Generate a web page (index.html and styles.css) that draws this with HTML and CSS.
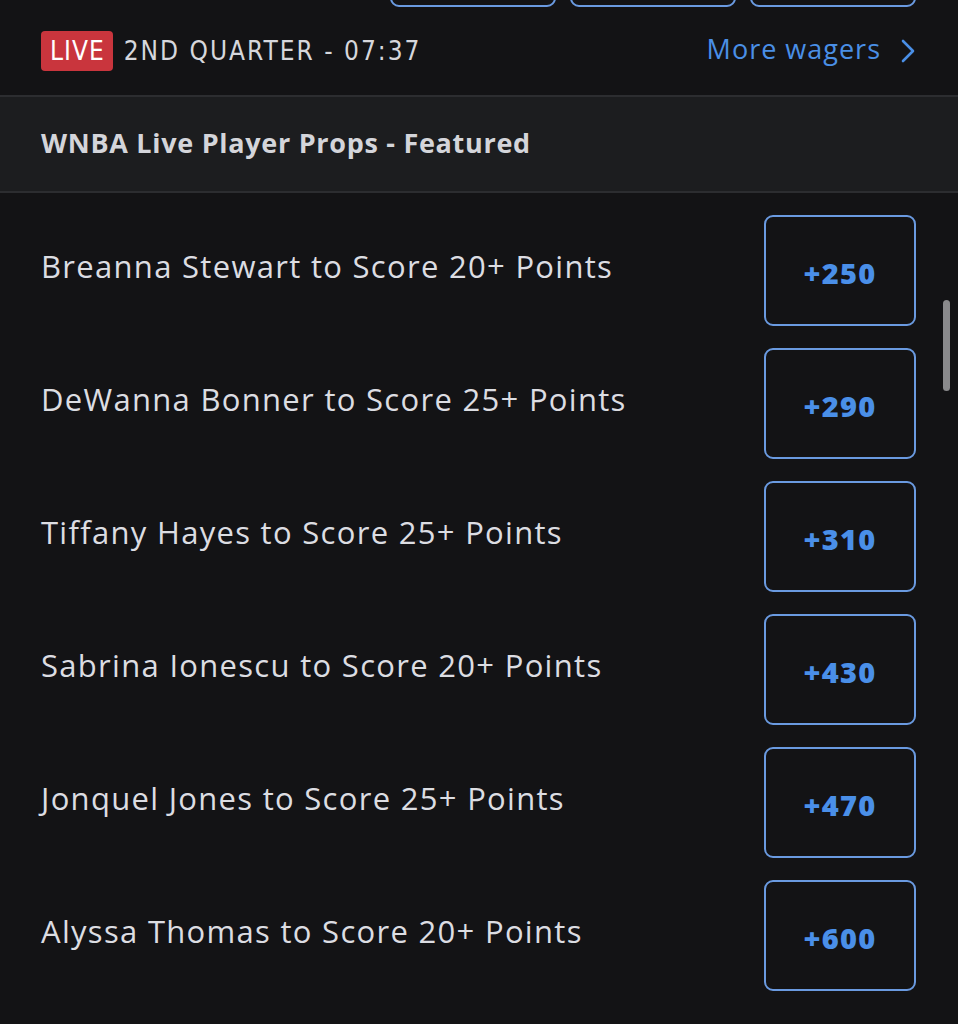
FILE: index.html
```html
<!DOCTYPE html>
<html>
<head>
  <title>WNBA Live Player Props</title>
  <link rel="stylesheet" href="styles.css">
</head>
<body>
  <div class="top-odds">
    <div class="top-btn"></div>
    <div class="top-btn"></div>
    <div class="top-btn"></div>
  </div>

  <div class="live-row">
    <div class="live-info">
      <span class="live-badge">LIVE</span>
      <span class="clock">2ND QUARTER - 07:37</span>
    </div>
    <a class="more" href="#">More wagers
      <svg width="16" height="24" viewBox="0 0 16 24"><path d="M3 2 L13 12 L3 22" fill="none" stroke="#4a8fe6" stroke-width="2.6" stroke-linecap="round" stroke-linejoin="round"/></svg>
    </a>
  </div>

  <div class="section-head">WNBA Live Player Props - Featured</div>

  <div class="props">
    <div class="prop">
      <span class="prop-name">Breanna Stewart to Score 20+ Points</span>
      <button class="odds">+250</button>
    </div>
    <div class="prop">
      <span class="prop-name">DeWanna Bonner to Score 25+ Points</span>
      <button class="odds">+290</button>
    </div>
    <div class="prop">
      <span class="prop-name">Tiffany Hayes to Score 25+ Points</span>
      <button class="odds">+310</button>
    </div>
    <div class="prop">
      <span class="prop-name">Sabrina Ionescu to Score 20+ Points</span>
      <button class="odds">+430</button>
    </div>
    <div class="prop">
      <span class="prop-name">Jonquel Jones to Score 25+ Points</span>
      <button class="odds">+470</button>
    </div>
    <div class="prop">
      <span class="prop-name">Alyssa Thomas to Score 20+ Points</span>
      <button class="odds">+600</button>
    </div>
  </div>

  <div class="scrollbar"></div>
</body>
</html>
```

FILE: styles.css
```css
* {
  margin: 0;
  padding: 0;
  box-sizing: border-box;
}

body {
  font-family: "Open Sans", "Noto Sans", sans-serif;
  background-color: #131315;
  color: #dcdde2;
  width: 958px;
  height: 1024px;
  overflow: hidden;
  position: relative;
}

.top-odds {
  display: flex;
  justify-content: flex-end;
  gap: 14px;
  padding-right: 42px;
  margin-top: -40px;
}

.top-btn {
  width: 166px;
  height: 47px;
  border: 2px solid #6a9ae0;
  border-radius: 9px;
}

.live-row {
  height: 88px;
  display: flex;
  align-items: center;
  justify-content: space-between;
  padding: 0 42px 0 41px;
}

.live-info {
  display: flex;
  align-items: center;
  gap: 11px;
}

.live-badge {
  background-color: #c9353d;
  color: #fff;
  font-family: "DejaVu Sans Condensed", "DejaVu Sans", sans-serif;
  font-size: 26px;
  letter-spacing: 1px;
  padding: 3px 8px 3px 9px;
  border-radius: 4px;
  line-height: 34px;
}

.clock {
  font-family: "DejaVu Sans Condensed", "DejaVu Sans", sans-serif;
  font-size: 26px;
  letter-spacing: 2px;
  color: #d6d7dc;
}

.more {
  display: flex;
  align-items: center;
  gap: 19px;
  color: #4a8fe6;
  text-decoration: none;
  font-size: 27px;
  letter-spacing: 1px;
  margin-top: -6px;
}

.more svg {
  margin-top: 6px;
}

.section-head {
  height: 98px;
  background-color: #1c1d1f;
  border-top: 2px solid #2c2d30;
  border-bottom: 2px solid #2c2d30;
  display: flex;
  align-items: center;
  padding-left: 41px;
  padding-bottom: 3px;
  font-size: 27px;
  font-weight: bold;
  letter-spacing: 0.7px;
  color: #d4d5da;
}

.props {
  display: flex;
  flex-direction: column;
  gap: 22px;
  padding: 22px 42px 0 41px;
}

.prop {
  display: flex;
  align-items: center;
  justify-content: space-between;
  height: 111px;
}

.prop-name {
  font-size: 31px;
  letter-spacing: 1.3px;
  color: #dcdde2;
  margin-top: -9px;
}

.odds {
  width: 152px;
  height: 111px;
  background-color: transparent;
  border: 2px solid #6a9ae0;
  border-radius: 9px;
  color: #4a8fe8;
  font-family: "Open Sans", "Noto Sans", sans-serif;
  font-size: 29px;
  font-weight: 800;
  letter-spacing: 1.2px;
  cursor: pointer;
  padding-top: 4px;
}

.scrollbar {
  position: absolute;
  top: 300px;
  left: 943px;
  width: 7px;
  height: 91px;
  border-radius: 4px;
  background-color: #8a8a8c;
}
```
